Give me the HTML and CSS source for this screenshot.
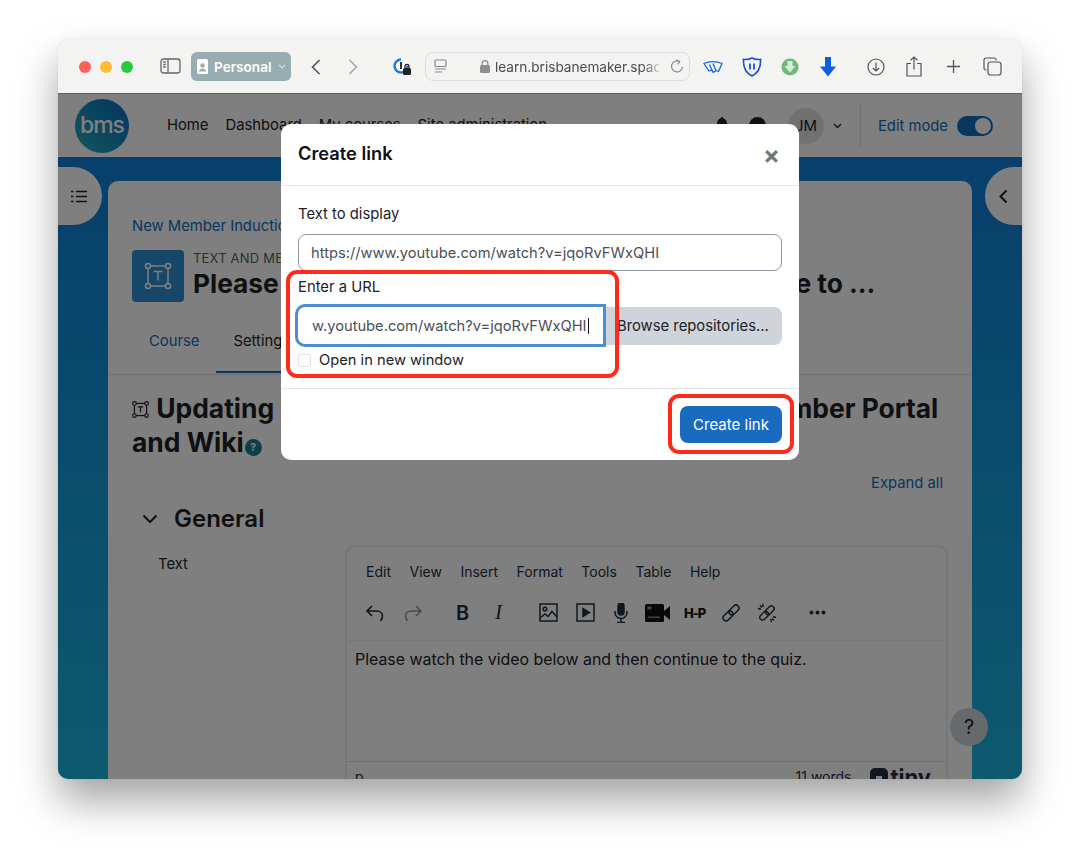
FILE: index.html
```html
<!DOCTYPE html>
<html lang="en">
<head>
    <meta charset="UTF-8">
    <title>Create link</title>
    <link rel="stylesheet" href="styles.css">
</head>
<body>
<div class="window">
    <div class="toolbar">
        <div class="lights"><span class="red"></span><span class="yellow"></span><span class="green"></span></div>
        <svg class="tb sidebar-ico" width="22" height="17" viewBox="0 0 22 17" fill="none" stroke="#666" stroke-width="1.3"><rect x="1" y="1" width="19" height="14" rx="2.5"/><path d="M8 1v14M3.2 4h2.6M3.2 6.5h2.6M3.2 9h2.6"/></svg>
        <div class="profile">
            <svg width="12" height="16" viewBox="0 0 12 16"><rect width="11" height="15" rx="1.5" fill="#fff"/><circle cx="5.5" cy="6.5" r="2.2" fill="#98adb1"/><path d="M2 12.5c0-2 1.5-3 3.5-3s3.500 1 3.500 3z" fill="#98adb1"/></svg>
            <span>Personal</span>
            <svg class="profile-caret" width="8" height="5" viewBox="0 0 8 5" fill="none" stroke="#d5e0e2" stroke-width="1.2"><path d="M1 1l3 3 3-3"/></svg>
        </div>
        <svg class="tb back" width="10" height="16" viewBox="0 0 10 16" fill="none" stroke="#555" stroke-width="1.600"><path d="M8.500 1L1.500 8l7 7"/></svg>
        <svg class="tb forward" width="10" height="16" viewBox="0 0 10 16" fill="none" stroke="#a5a5a5" stroke-width="1.600"><path d="M1.500 1l7 7-7 7"/></svg>
        <svg class="tb onepass" width="20" height="20" viewBox="0 0 20 20"><circle cx="9" cy="9" r="8.500" fill="#fff"/><path d="M9 2.500A6.500 6.500 0 1 0 15.500 9" fill="none" stroke="#1a73e8" stroke-width="2.400"/><rect x="8" y="5" width="2" height="7" fill="#333"/><rect x="11" y="11" width="8" height="7" rx="1.500" fill="#222"/><path d="M13 11V9.500a2 2 0 0 1 4 0V11" fill="none" stroke="#222" stroke-width="1.300"/></svg>
        <div class="urlbar">
            <svg width="13" height="15" viewBox="0 0 13 15" fill="none" stroke="#888" stroke-width="1.200"><rect x="1" y="1" width="11" height="6.500" rx="1"/><path d="M1 10h11M1 13h7"/></svg>
            <svg class="lock" width="10" height="13" viewBox="0 0 10 13"><rect y="5" width="10" height="8" rx="1.500" fill="#8f8f8f"/><path d="M2.200 5.500V3.500a2.800 2.800 0 0 1 5.600 0v2" fill="none" stroke="#8f8f8f" stroke-width="1.300"/></svg>
            <span class="url">learn.brisbanemaker.spac</span>
            <svg class="reload" width="14" height="15" viewBox="0 0 14 15" fill="none" stroke="#888" stroke-width="1.200"><path d="M9.500 2.500A5.500 5.500 0 1 0 12.500 8M6.500 0.800l3.200 1.700-1.700 3"/></svg>
        </div>
        <svg class="tb ext1" width="20" height="14" viewBox="0 0 20 14" fill="none" stroke="#1967e0" stroke-width="1.300"><path d="M1 3.500C6 1 14 1 19 3.500l-3.500 8-2.500-1-2.800 2-1.200-2.500-3 1zM6.500 4.500l3 7M10 3.500l3 7"/></svg>
        <svg class="tb ext2" width="20" height="20" viewBox="0 0 20 20" fill="none" stroke="#1454d8" stroke-width="1.600"><path d="M10 1c3 1.500 6 1.700 8.500 1.300C19 10 16 16 10 19 4 16 1 10 1.500 2.300 4 2.700 7 2.500 10 1z"/><path d="M8 6.500v6M12 6.500v6" stroke-width="1.800"/></svg>
        <svg class="tb ext3" width="18" height="18" viewBox="0 0 18 18"><circle cx="9" cy="9" r="8.500" fill="#6fb87a"/><path d="M6.500 3h5v5h3L9 14.500 3.500 8h3z" fill="#d7ecd9"/></svg>
        <svg class="tb ext4" width="16" height="20" viewBox="0 0 16 20"><path d="M5 0h6v9.500h5L8 19.500 0 9.500h5z" fill="#0e5fe0"/></svg>
        <svg class="tb dl" width="18" height="18" viewBox="0 0 18 18" fill="none" stroke="#555" stroke-width="1.200"><circle cx="9" cy="9" r="8"/><path d="M9 4.500v8.500M5.800 10L9 13l3.200-3"/></svg>
        <svg class="tb share" width="16" height="21" viewBox="0 0 16 21" fill="none" stroke="#555" stroke-width="1.200"><path d="M5 7.500H1v12.500h14V7.500h-4M8 13.500V1M4.500 4.300L8 1l3.500 3.300"/></svg>
        <svg class="tb plus" width="15" height="15" viewBox="0 0 15 15" fill="none" stroke="#555" stroke-width="1.300"><path d="M7.500 1v13M1 7.500h13"/></svg>
        <svg class="tb tabs-ico" width="19" height="19" viewBox="0 0 19 19" fill="none" stroke="#555" stroke-width="1.200"><rect x="5" y="5" width="13" height="13" rx="2.500"/><path d="M3.500 13H3a2 2 0 0 1-2-2V3a2 2 0 0 1 2-2h8a2 2 0 0 1 2 2v.500"/></svg>
    </div>

    <div class="page">
        <header class="site-head">
            <div class="logo">bms</div>
            <nav class="nav">
                <a>Home</a><a>Dashboard</a><a>My courses</a><a>Site administration</a>
            </nav>
            <div class="head-right">
                <svg width="14" height="17" viewBox="0 0 14 17"><path d="M7 0c.8 0 1.300.6 1.300 1.300C10.500 2 12 4 12 6.500V10l2 3H0l2-3V6.500C2 4 3.500 2 5.700 1.300 5.700.6 6.200 0 7 0zM5 14h4a2 2 0 0 1-4 0z" fill="#1d2125"/></svg>
                <svg class="chat" width="17" height="17" viewBox="0 0 17 17"><circle cx="8.500" cy="8.500" r="8.500" fill="#1d2125"/></svg>
                <div class="avatar">JM</div>
                <svg class="caret" width="9" height="6" viewBox="0 0 9 6" fill="none" stroke="#1d2125" stroke-width="1.300"><path d="M1 1l3.500 3.500L8 1"/></svg>
                <div class="divider"></div>
                <span class="edit-label">Edit mode</span>
                <div class="toggle"><span></span></div>
            </div>
        </header>

        <main class="main">
            <div class="card">
                <div class="card-top">
                    <a class="crumb">New Member Induction</a>
                    <div class="title-row">
                        <div class="activity-ico">
                            <svg width="28" height="28" viewBox="0 0 28 28" fill="none" stroke="#fff" stroke-width="1.500"><rect x="4" y="4" width="20" height="20"/><circle cx="4" cy="4" r="2.500" fill="#2f8ed0"/><circle cx="24" cy="4" r="2.500" fill="#2f8ed0"/><circle cx="4" cy="24" r="2.500" fill="#2f8ed0"/><circle cx="24" cy="24" r="2.500" fill="#2f8ed0"/><path d="M9.500 9.500h9M14 9.500v9"/></svg>
                        </div>
                        <div>
                            <div class="overline">TEXT AND MEDIA AREA</div>
                            <h1 class="page-title">Please watch the video below and then continue to ...</h1>
                        </div>
                    </div>
                    <div class="tabs">
                        <a class="tab tab-link">Course</a>
                        <a class="tab tab-active">Settings</a>
                    </div>
                </div>
                <div class="card-body">
                    <h2 class="form-title">
                        <svg class="form-ico" width="17" height="17" viewBox="0 0 28 28" fill="none" stroke="#1d2125" stroke-width="2"><rect x="4" y="4" width="20" height="20"/><circle cx="4" cy="4" r="3" fill="#fff"/><circle cx="24" cy="4" r="3" fill="#fff"/><circle cx="4" cy="24" r="3" fill="#fff"/><circle cx="24" cy="24" r="3" fill="#fff"/><path d="M9.500 9.500h9M14 9.500v9"/></svg>
                        Updating Text and media area in Logging in to Member Portal<br>and Wiki<span class="help-dot">?</span>
                    </h2>
                    <div class="expand-row"><a>Expand all</a></div>
                    <div class="section-head">
                        <svg width="16" height="10" viewBox="0 0 16 10" fill="none" stroke="#1d2125" stroke-width="2"><path d="M1.500 1.500L8 8l6.500-6.500"/></svg>
                        <h3>General</h3>
                    </div>
                    <div class="field">
                        <div class="field-label">Text</div>
                        <div class="editor">
                            <div class="menubar">
                                <span>Edit</span><span>View</span><span>Insert</span><span>Format</span><span>Tools</span><span>Table</span><span>Help</span>
                            </div>
                            <div class="edit-tools">
                                <svg width="20" height="20" viewBox="0 0 20 20" fill="none" stroke="#222f3e" stroke-width="1.700"><path d="M7 3L2 8l5 5M2 8h10c3 0 5.500 2 5.500 5 0 2-.8 3.500-2 5"/></svg>
                                <svg class="dim" width="20" height="20" viewBox="0 0 20 20" fill="none" stroke="#222f3e" stroke-width="1.700"><path d="M13 3l5 5-5 5M18 8H8c-3 0-5.500 2-5.500 5 0 2 .8 3.500 2 5"/></svg>
                                <b class="t-bold">B</b>
                                <i class="t-ital">I</i>
                                <svg class="t-img" width="19" height="19" viewBox="0 0 19 19" fill="none" stroke="#222f3e" stroke-width="1.500"><rect x="1" y="1" width="17" height="17"/><circle cx="6" cy="6" r="1.800"/><path d="M1 15l5-4 3 2.500 4-5 5 5.500"/></svg>
                                <svg class="t-vid" width="19" height="19" viewBox="0 0 19 19" fill="none" stroke="#222f3e" stroke-width="1.500"><rect x="1" y="1" width="17" height="17"/><path d="M7 5.500v8l6.500-4z" fill="#222f3e"/></svg>
                                <svg class="t-mic" width="14" height="20" viewBox="0 0 14 20" fill="none" stroke="#222f3e" stroke-width="1.500"><rect x="4" y="0" width="6" height="12" rx="3" fill="#222f3e"/><path d="M1 8v1.500a6 6 0 0 0 12 0V8M7 15.500V19M3 19.500h8"/></svg>
                                <svg class="t-cam" width="25" height="18" viewBox="0 0 25 18"><rect width="19" height="18" rx="1.500" fill="#111"/><path d="M19 7l6-5v14l-6-5z" fill="#111"/><rect x="2.500" y="2.500" width="4" height="3" fill="#888"/><rect x="3" y="12.500" width="12" height="1.500" fill="#888"/></svg>
                                <span class="t-hp">H-P</span>
                                <svg class="t-link" width="20" height="20" viewBox="0 0 20 20" fill="none" stroke="#222f3e" stroke-width="1.500"><g transform="rotate(-45 10 10)"><rect x="0" y="7" width="11.500" height="6" rx="3"/><rect x="8.500" y="7" width="11.500" height="6" rx="3"/></g></svg>
                                <svg class="t-unlink" width="20" height="20" viewBox="0 0 20 20" fill="none" stroke="#222f3e" stroke-width="1.400"><g transform="rotate(-45 10 10)"><rect x="1" y="7.200" width="10" height="5.600" rx="2.800"/><rect x="9" y="7.200" width="10" height="5.600" rx="2.800"/></g><path d="M1 5.500l3 .8M5.500 1l.8 3M3 2.500l2 2M19 14.500l-3-.8M14.500 19l-.8-3M17 17.500l-2-2"/></svg>
                                <svg class="t-more" width="17" height="5" viewBox="0 0 17 5" fill="#222f3e"><circle cx="2.500" cy="2.500" r="2"/><circle cx="8.500" cy="2.500" r="2"/><circle cx="14.500" cy="2.500" r="2"/></svg>
                            </div>
                            <div class="edit-area">Please watch the video below and then continue to the quiz.</div>
                            <div class="statusbar">
                                <span>p</span>
                                <span class="words">11 words</span>
                                <span class="tiny-mark"><span></span></span>
                                <span class="tiny">tiny</span>
                            </div>
                        </div>
                    </div>
                </div>
            </div>
        </main>

        <div class="drawer-btn drawer-left">
            <svg width="16" height="13" viewBox="0 0 16 13" fill="none" stroke="#1d2125" stroke-width="1.700"><path d="M5 1.500h11M5 6.500h11M5 11.500h11M0 1.500h2.500M0 6.500h2.500M0 11.500h2.500"/></svg>
        </div>
        <div class="drawer-btn drawer-right">
            <svg width="9" height="15" viewBox="0 0 9 15" fill="none" stroke="#1d2125" stroke-width="2"><path d="M7.500 1.500l-6 6 6 6"/></svg>
        </div>
        <div class="help-btn">?</div>

        <div class="overlay"></div>

        <div class="modal">
            <div class="modal-head">
                <h4>Create link</h4>
                <span class="close">×</span>
            </div>
            <div class="modal-body">
                <div class="m-label">Text to display</div>
                <div class="text-input">https://www.youtube.com/watch?v=jqoRvFWxQHI</div>
                <div class="m-label url-label">Enter a URL</div>
                <div class="url-group">
                    <div class="url-input">w.youtube.com/watch?v=jqoRvFWxQHI<span class="cursor"></span></div>
                    <div class="browse">Browse repositories...</div>
                </div>
                <label class="check-row"><span class="check"></span>Open in new window</label>
            </div>
            <div class="modal-foot">
                <button class="btn-primary">Create link</button>
            </div>
            <div class="mark mark-url"></div>
            <div class="mark mark-btn"></div>
        </div>
    </div>
</div>
</body>
</html>
```

FILE: styles.css
```css
/* Screenshot of a browser window with a modal */
* {
    box-sizing: border-box;
}
body {
    margin: 0;
    height: 856px;
    overflow: hidden;
    background-color: #fff;
    font-family: Inter, "Liberation Sans", sans-serif;
    color: #1d2125;
}
h1, h2, h3, h4 {
    margin: 0;
}
.window {
    margin: 39px 58px 0;
    width: 964px;
    height: 740px;
    border-radius: 10px;
    overflow: hidden;
    box-shadow: 0 22px 42px rgba(0, 0, 0, 0.36), 0 0 1px rgba(0, 0, 0, 0.3);
    position: relative;
}

/* browser toolbar */
.toolbar {
    height: 55px;
    background-color: #f3f3f2;
    border-bottom: 1px solid #5c5c5c;
    display: flex;
    align-items: center;
    padding-left: 21px;
    padding-top: 1px;
}
.toolbar .tb {
    flex: none;
}
.lights {
    display: flex;
    gap: 9px;
}
.lights span {
    width: 12px;
    height: 12px;
    border-radius: 50%;
}
.red { background-color: #ff5f57; }
.yellow { background-color: #febc2e; }
.green { background-color: #28c840; }
.sidebar-ico { margin-left: 27px; }
.profile {
    margin-left: 9px;
    width: 100px;
    height: 29px;
    background-color: #98adb1;
    border-radius: 6px;
    display: flex;
    align-items: center;
    gap: 5px;
    padding-left: 6px;
    color: #fff;
    font-size: 13.6px;
    font-weight: 600;
}
.profile-caret { margin-left: 1px; }
.back { margin-left: 20px; }
.forward { margin-left: 27px; }
.onepass { margin-left: 34px; }
.urlbar {
    margin-left: 13px;
    width: 265px;
    height: 29px;
    border: 1px solid #dcdcdc;
    border-radius: 8px;
    display: flex;
    align-items: center;
    padding-left: 8px;
    flex: none;
}
.lock { margin-left: 33px; }
.url {
    margin-left: 5px;
    font-size: 13.6px;
    color: #4a4a4a;
    white-space: nowrap;
    width: 164px;
    overflow: hidden;
    -webkit-mask-image: linear-gradient(90deg, #000 90%, rgba(0, 0, 0, 0.25));
    mask-image: linear-gradient(90deg, #000 90%, rgba(0, 0, 0, 0.25));
}
.reload { margin-left: 11px; }
.ext1 { margin-left: 13px; }
.ext2 { margin-left: 19px; }
.ext3 { margin-left: 19px; }
.ext4 { margin-left: 21px; }
.dl { margin-left: 31px; }
.share { margin-left: 21px; }
.plus { margin-left: 24px; }
.tabs-ico { margin-left: 22px; }

/* moodle page behind the overlay */
.page {
    height: 685px;
    position: relative;
    overflow: hidden;
    background: linear-gradient(180deg, #0f7ad8 0%, #1ab4de 100%);
}
.site-head {
    height: 63px;
    background-color: #fff;
    display: flex;
    align-items: center;
    padding-left: 17px;
    font-size: 14.8px;
}
.logo {
    width: 54px;
    height: 54px;
    border-radius: 50%;
    background: linear-gradient(45deg, #27aebb, #0b6ac0);
    color: #fff;
    font-size: 23px;
    font-weight: 500;
    text-align: center;
    line-height: 52px;
    letter-spacing: -1px;
}
.nav {
    margin-left: 38px;
    padding-bottom: 2px;
    display: flex;
    gap: 17px;
}
.head-right {
    margin-left: auto;
    padding-right: 29px;
    display: flex;
    align-items: center;
}
.chat { margin-left: 20px; }
.avatar {
    margin-left: 22px;
    width: 36px;
    height: 36px;
    border-radius: 50%;
    background-color: #e2e3e5;
    text-align: center;
    line-height: 36px;
    font-size: 15px;
}
.caret { margin-left: 9px; }
.divider {
    margin-left: 18px;
    width: 1px;
    height: 46px;
    background-color: #dee2e6;
}
.edit-label {
    margin-left: 17px;
    color: #0f6cbf;
    font-size: 14.8px;
}
.toggle {
    margin-left: 9px;
    width: 36px;
    height: 20px;
    border-radius: 10px;
    background-color: #0f6cbf;
    position: relative;
}
.toggle span {
    position: absolute;
    right: 2px;
    top: 2px;
    width: 16px;
    height: 16px;
    border-radius: 50%;
    background-color: #fff;
}
.main {
    padding: 24px 50px 0;
}
.card {
    background-color: #fff;
    border-radius: 10px;
    height: 640px;
}
.card-top {
    padding: 36px 0 0 24px;
    border-bottom: 1px solid #dee2e6;
    height: 194px;
}
.crumb {
    display: block;
    color: #0f6cbf;
    font-size: 14.8px;
    line-height: 18px;
}
.title-row {
    margin-top: 15px;
    display: flex;
    gap: 9px;
}
.activity-ico {
    width: 52px;
    height: 52px;
    border-radius: 4px;
    background-color: #2f8ed0;
    display: flex;
    align-items: center;
    justify-content: center;
}
.overline {
    font-size: 13px;
    line-height: 15px;
    margin-top: 1px;
    color: #5a5f64;
    letter-spacing: 0.2px;
}
.page-title {
    margin-top: 2px;
    font-size: 26.3px;
    line-height: 32px;
    font-weight: 700;
    white-space: nowrap;
}
.tabs {
    margin-top: 21px;
    display: flex;
    font-size: 14.8px;
}
.tab {
    height: 50px;
    line-height: 37px;
    padding: 0 17px;
}
.tab-link {
    color: #0f6cbf;
}
.tab-active {
    width: 110px;
    border-bottom: 2px solid #0f6cbf;
}
.card-body {
    padding: 16px 24px 0;
}
.form-title {
    font-size: 26.4px;
    line-height: 34px;
    font-weight: 700;
    white-space: nowrap;
}
.form-ico {
    margin-right: 1px;
}
.help-dot {
    display: inline-block;
    width: 17px;
    height: 17px;
    border-radius: 50%;
    background-color: #14808e;
    color: #fff;
    font-size: 11px;
    line-height: 17px;
    text-align: center;
    vertical-align: 1px;
    margin-left: 1px;
}
.expand-row {
    margin-top: 15px;
    text-align: right;
    padding-right: 5px;
    color: #0f6cbf;
    font-size: 14.8px;
    line-height: 18px;
}
.section-head {
    margin-top: 11px;
    padding-left: 10px;
    display: flex;
    align-items: center;
    gap: 16px;
}
.section-head h3 {
    font-size: 24px;
    line-height: 32px;
    font-weight: 600;
}
.field {
    margin-top: 10px;
    display: flex;
}
.field-label {
    width: 213px;
    padding: 10px 0 0 26px;
    font-size: 14.8px;
}
.editor {
    width: 603px;
    height: 250px;
    border: 2px solid #eceef0;
    border-radius: 10px;
    margin-right: -5px;
    flex: none;
}
.menubar {
    height: 44px;
    display: flex;
    align-items: center;
    gap: 18.5px;
    padding: 4px 0 0 19px;
    font-size: 14px;
    color: #222f3e;
}
.edit-tools {
    height: 49px;
    display: flex;
    align-items: center;
    padding: 0 0 6px 18px;
    box-shadow: 0 2px 2px -1px rgba(34, 47, 62, 0.1);
    color: #222f3e;
}
.edit-tools .dim { margin-left: 18px; opacity: 0.5; }
.t-bold { margin-left: 33px; font-size: 20px; font-weight: 600; width: 16px; }
.t-ital { margin-left: 23px; font-family: "Liberation Serif", serif; font-size: 21px; width: 12px; }
.t-img { margin-left: 32px; }
.t-vid { margin-left: 18px; }
.t-mic { margin-left: 19px; }
.t-cam { margin-left: 17px; }
.t-hp { margin-left: 14px; font-size: 13px; font-weight: 800; width: 27px; letter-spacing: -1px; color: #111; }
.t-link { margin-left: 10px; }
.t-unlink { margin-left: 16px; }
.t-more { margin-left: 32px; }
.edit-area {
    height: 121px;
    padding: 10px 8px;
    font-size: 15.9px;
    line-height: 20px;
}
.statusbar {
    border-top: 1px solid #dee2e6;
    height: 30px;
    display: flex;
    align-items: center;
    padding-left: 8px;
    font-size: 14px;
    color: #222f3e;
}
.words { margin-left: 432px; }
.tiny-mark {
    margin-left: 18px;
    width: 18px;
    height: 18px;
    border-radius: 5px;
    background-color: #222f3e;
    display: flex;
    align-items: flex-end;
    justify-content: center;
}
.tiny-mark span {
    width: 6px;
    height: 10px;
    background-color: #fff;
}
.tiny {
    margin-left: 3px;
    font-size: 22px;
    font-weight: 700;
}
.drawer-btn {
    position: absolute;
    top: 73px;
    height: 58px;
    background-color: #fff;
    display: flex;
    align-items: center;
    justify-content: center;
}
.drawer-left {
    left: 0;
    width: 44px;
    padding-right: 2px;
    border-radius: 0 29px 29px 0;
}
.drawer-right {
    right: 0;
    width: 37px;
    border-radius: 29px 0 0 29px;
}
.help-btn {
    position: absolute;
    left: 892px;
    top: 614px;
    width: 38px;
    height: 38px;
    border-radius: 50%;
    background-color: #ced4da;
    text-align: center;
    line-height: 38px;
    font-size: 20px;
}
.overlay {
    position: absolute;
    inset: 0;
    background-color: rgba(0, 0, 0, 0.5);
}

/* modal */
.modal {
    position: absolute;
    left: 223px;
    top: 30px;
    width: 518px;
    height: 336px;
    background-color: #fff;
    border-radius: 10px;
    font-size: 14.8px;
}
.modal-head {
    height: 62px;
    border-bottom: 1px solid #e3e5e7;
    display: flex;
    justify-content: space-between;
    padding: 18px 19px 0 17px;
}
.modal-head h4 {
    font-size: 18.3px;
    line-height: 23px;
    font-weight: 600;
    color: #111;
}
.close {
    font-size: 25px;
    line-height: 26px;
    font-weight: 700;
    color: #777;
}
.modal-body {
    height: 203px;
    padding: 18px 17px 0;
    border-bottom: 1px solid #e3e5e7;
}
.m-label {
    line-height: 20px;
}
.text-input {
    margin-top: 10px;
    height: 37px;
    border: 1px solid #8f959e;
    border-radius: 8px;
    padding-left: 12px;
    line-height: 36px;
    color: #495057;
    font-size: 14.7px;
}
.url-label {
    margin-top: 6px;
}
.url-group {
    margin-top: 10px;
    display: flex;
    height: 38px;
    font-size: 14.7px;
}
.url-input {
    width: 311px;
    height: 43px;
    margin: -3px -2px 0 -3px;
    border: 3px solid #4a90d0;
    border-radius: 10px 0 0 10px;
    padding-left: 14px;
    line-height: 39px;
    color: #495057;
    background-color: #fff;
    z-index: 1;
    white-space: nowrap;
}
.cursor {
    display: inline-block;
    width: 1px;
    height: 16px;
    background-color: #111;
    vertical-align: -3px;
    margin-left: 1px;
}
.browse {
    flex: 1;
    background-color: #ced4da;
    border-radius: 0 8px 8px 0;
    padding-left: 13px;
    line-height: 38px;
    white-space: nowrap;
    font-size: 14.8px;
}
.check-row {
    margin-top: 5px;
    display: flex;
    align-items: center;
    gap: 8px;
    line-height: 20px;
    font-size: 14.7px;
}
.check {
    width: 13px;
    height: 13px;
    border: 1px solid #dcdfe3;
    border-radius: 3px;
}
.modal-foot {
    display: flex;
    justify-content: flex-end;
    padding: 17px 17px 0;
}
.btn-primary {
    width: 102px;
    height: 37px;
    background-color: #1a6bbd;
    color: #fff;
    border: 0;
    border-radius: 8px;
    font-family: inherit;
    font-size: 15px;
}
.mark {
    position: absolute;
    border: 4px solid #ff2a1a;
    border-radius: 11px;
}
.mark-url {
    left: 5px;
    top: 146px;
    width: 333px;
    height: 108px;
}
.mark-btn {
    left: 387px;
    top: 270px;
    width: 126px;
    height: 60px;
}
```
